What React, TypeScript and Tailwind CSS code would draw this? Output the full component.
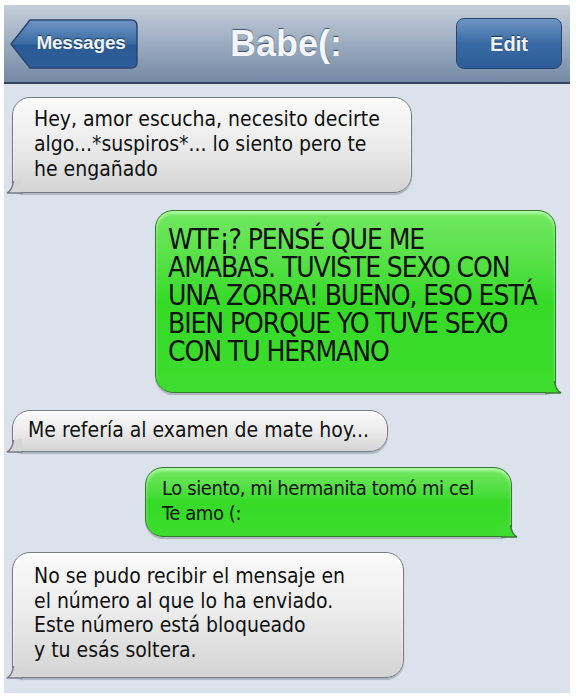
import React from "react";

const font = '"DejaVu Sans Condensed", "DejaVu Sans", "Liberation Sans", sans-serif';

function GrayBubble({ children, className }: { children: React.ReactNode; className: string }) {
  return (
    <div className={"relative " + className}>
      <div className="relative h-full rounded-[18px] rounded-bl-[10px] border-[1.5px] border-[#767c85] bg-gradient-to-b from-[#fbfbfb] via-[#ebebeb] to-[#d4d4d4] shadow-[0_2px_1px_rgba(90,100,115,0.35),inset_0_2px_2px_rgba(255,255,255,0.9)]">
        {children}
      </div>
      <svg className="absolute -left-[6px] -bottom-[1px]" width="18" height="14" viewBox="0 0 18 14">
        <path d="M16 0 L16 13 L1 13 Q6 10 7 2 Z" fill="#d6d6d6" />
        <path d="M7.5 1 Q6.5 10 1 13 L17 13" fill="none" stroke="#767c85" strokeWidth="1.5" />
      </svg>
    </div>
  );
}

function GreenBubble({ children, className }: { children: React.ReactNode; className: string }) {
  return (
    <div className={"relative " + className}>
      <div className="relative h-full overflow-hidden rounded-[18px] rounded-br-[10px] border-[1.5px] border-[#3a7733] bg-gradient-to-b from-[#72e862] via-[#35da26] to-[#3edc2f] shadow-[0_2px_1px_rgba(80,100,90,0.35),inset_0_3px_3px_rgba(200,255,190,0.7)]">
        {children}
      </div>
      <svg className="absolute -right-[6px] -bottom-[1px]" width="18" height="14" viewBox="0 0 18 14">
        <path d="M2 0 L2 13 L17 13 Q12 10 11 2 Z" fill="#3edc2f" />
        <path d="M10.5 1 Q11.5 10 17 13 L1 13" fill="none" stroke="#3a7733" strokeWidth="1.5" />
      </svg>
    </div>
  );
}

export default function App() {
  return (
    <div className="w-[577px] h-[700px] bg-white pt-[5px] pl-[4px] pr-[7px]" style={{ fontFamily: font }}>
      {/* Nav bar */}
      <div className="relative h-[79px] border-b-2 border-[#34445c] bg-gradient-to-b from-[#c6cfdb] via-[#9cacc0] to-[#7489a6] flex items-center justify-between pl-[6px] pr-[8px]">
        <div className="relative w-[128px] h-[50px]">
          <svg className="absolute inset-0" width="128" height="50" viewBox="0 0 128 50">
            <defs>
              <linearGradient id="bb" x1="0" y1="0" x2="0" y2="1">
                <stop offset="0" stopColor="#6f96c4" />
                <stop offset="0.5" stopColor="#3a6aa3" />
                <stop offset="0.52" stopColor="#2b5b95" />
                <stop offset="1" stopColor="#2f5f9a" />
              </linearGradient>
            </defs>
            <path d="M20 1 L121 1 Q127 1 127 7 L127 43 Q127 49 121 49 L20 49 L1 25 Z" fill="url(#bb)" stroke="#2a4670" strokeWidth="1.5" />
          </svg>
          <div
            className="absolute inset-0 flex items-center justify-center pl-[14px] text-[19px] font-bold text-[#eef3f8] tracking-[-0.2px]"
            style={{ fontFamily: '"Liberation Sans", Arial, sans-serif', textShadow: "0 -1px 1px rgba(20,40,70,0.8)" }}
          >
            Messages
          </div>
        </div>
        <div
          className="text-[36px] font-bold text-[#f2f5f9] -ml-[22px]"
          style={{ fontFamily: '"Liberation Sans", Arial, sans-serif', textShadow: "0 -1px 1px rgba(40,55,80,0.8)" }}
        >
          Babe(:
        </div>
        <div
          className="w-[106px] h-[51px] rounded-[8px] border-[1.5px] border-[#2a4670] bg-gradient-to-b from-[#6f96c4] via-[#3a6aa3] to-[#2d5d98] flex items-center justify-center text-[20px] font-bold text-[#eef3f8]"
          style={{ fontFamily: '"Liberation Sans", Arial, sans-serif', textShadow: "0 -1px 1px rgba(20,40,70,0.8)" }}
        >
          Edit
        </div>
      </div>

      {/* Conversation */}
      <div className="h-[609px] bg-[#dbe2ec] pt-[13px] flex flex-col text-[#111]">
        <GrayBubble className="ml-[8px] w-[400px] h-[96px]">
          <div className="pl-[21px] pt-[9px] text-[21px] leading-[25px] whitespace-nowrap">
            Hey, amor escucha, necesito decirte<br />
            algo...*suspiros*... lo siento pero te<br />
            he engañado
          </div>
        </GrayBubble>

        <GreenBubble className="mt-[17px] ml-[151px] w-[401px] h-[183px]">
          <div className="pl-[12px] pt-[15px] text-[28px] leading-[28px] tracking-[-1.1px] whitespace-nowrap">
            WTF¡? PENSÉ QUE ME<br />
            AMABAS. TUVISTE SEXO CON<br />
            UNA ZORRA! BUENO, ESO ESTÁ<br />
            BIEN PORQUE YO TUVE SEXO<br />
            CON TU HERMANO
          </div>
        </GreenBubble>

        <GrayBubble className="mt-[17px] ml-[8px] w-[376px] h-[42px]">
          <div className="pl-[15px] pt-[7px] text-[21px] leading-[25px] whitespace-nowrap">
            Me refería al examen de mate hoy...
          </div>
        </GrayBubble>

        <GreenBubble className="mt-[15px] ml-[141px] w-[367px] h-[70px]">
          <div className="pl-[16px] pt-[8px] text-[20px] leading-[25px] tracking-[-0.4px] whitespace-nowrap">
            Lo siento, mi hermanita tomó mi cel<br />
            Te amo (:
          </div>
        </GreenBubble>

        <GrayBubble className="mt-[15px] ml-[8px] w-[392px] h-[126px]">
          <div className="pl-[21px] pt-[11px] text-[21px] leading-[24.5px] whitespace-nowrap">
            No se pudo recibir el mensaje en<br />
            el número al que lo ha enviado.<br />
            Este número está bloqueado<br />
            y tu esás soltera.
          </div>
        </GrayBubble>
      </div>
    </div>
  );
}
